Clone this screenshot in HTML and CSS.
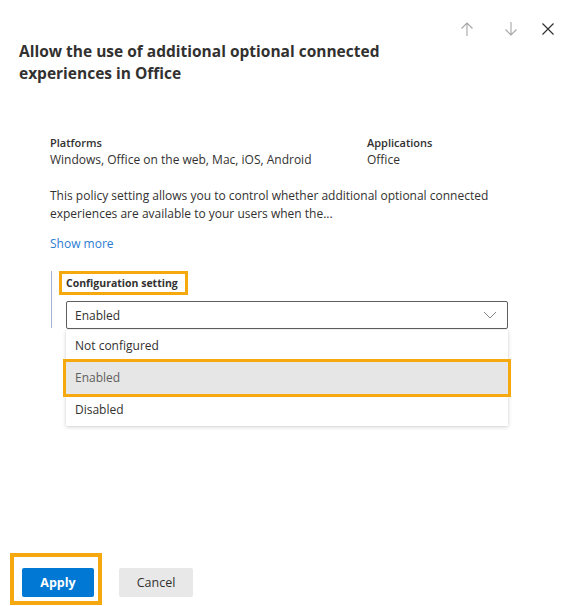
FILE: index.html
```html
<!DOCTYPE html>
<html>
<head>
<meta charset="utf-8">
<link rel="stylesheet" href="styles.css">
</head>
<body>
<div class="panel">
  <div class="topbar">
    <svg class="nav-icon up" width="14" height="16" viewBox="0 0 14 16"><path d="M7 15V2M1.5 7.5L7 2l5.5 5.5" fill="none" stroke="currentColor" stroke-width="1.1"/></svg>
    <svg class="nav-icon down" width="14" height="16" viewBox="0 0 14 16"><path d="M7 1v13M1.5 8.5L7 14l5.5-5.5" fill="none" stroke="currentColor" stroke-width="1.1"/></svg>
    <svg class="nav-icon close" width="14" height="14" viewBox="0 0 14 14"><path d="M1.5 1.5l11 11M12.5 1.5l-11 11" fill="none" stroke="currentColor" stroke-width="1.2"/></svg>
  </div>
  <h1 class="title">Allow the use of additional optional connected<br>experiences in Office</h1>
  <div class="meta">
    <div class="meta-col platforms">
      <div class="meta-label">Platforms</div>
      <div class="meta-value">Windows, Office on the web, Mac, iOS, Android</div>
    </div>
    <div class="meta-col">
      <div class="meta-label">Applications</div>
      <div class="meta-value">Office</div>
    </div>
  </div>
  <p class="desc">This policy setting allows you to control whether additional optional connected<br>experiences are available to your users when the...</p>
  <a class="show-more">Show more</a>
  <div class="config">
    <div class="config-field">
      <div class="label-box"><span class="config-label">Configuration setting</span></div>
      <div class="select">
        <span>Enabled</span>
        <svg class="chevron" width="14" height="8" viewBox="0 0 14 8"><path d="M1 1l6 6 6-6" fill="none" stroke="currentColor" stroke-width="1"/></svg>
      </div>
    </div>
    <div class="listbox">
      <div class="option">Not configured</div>
      <div class="option selected">Enabled</div>
      <div class="option">Disabled</div>
    </div>
  </div>
  <div class="footer">
    <div class="apply-box"><button class="btn primary">Apply</button></div>
    <button class="btn secondary">Cancel</button>
  </div>
</div>
</body>
</html>
```

FILE: styles.css
```css
* { box-sizing: border-box; }
html, body { margin: 0; padding: 0; background: #fff; }
body {
  font-family: "Segoe UI", "Open Sans", "Noto Sans", sans-serif;
  color: #323130;
  width: 565px;
  height: 606px;
  overflow: hidden;
}
.panel {
  height: 606px;
  display: flex;
  flex-direction: column;
}
.topbar {
  display: flex;
  justify-content: flex-end;
  align-items: center;
  height: 16px;
  margin-top: 21px;
  padding-right: 10px;
}
.nav-icon { display: block; }
.nav-icon.up { color: #a6a6a6; margin-right: 30px; }
.nav-icon.down { color: #a6a6a6; margin-right: 23px; }
.nav-icon.close { color: #323130; }
.title {
  margin: 3px 0 0 19px;
  font-size: 15.5px;
  font-weight: 700;
  line-height: 22px;
}
.meta {
  display: flex;
  margin: 51px 0 0 50px;
}
.meta-col.platforms { width: 317px; }
.meta-label {
  font-size: 11px;
  font-weight: 600;
  line-height: 16px;
}
.meta-value {
  font-size: 12px;
  line-height: 17px;
}
.desc {
  margin: 19px 0 0 50px;
  font-size: 12px;
  line-height: 18px;
}
.show-more {
  display: block;
  margin: 12px 0 0 50px;
  font-size: 12px;
  line-height: 18px;
  color: #2b7cd3;
}
.config {
  position: relative;
  margin: 18px 0 0 51px;
}
.config-field {
  border-left: 1.5px solid #9fb4cc;
  padding: 0 0 0 7px;
  width: 457px;
  height: 57px;
}
.label-box {
  display: flex;
  align-items: center;
  border: 3.5px solid #f6a80f;
  padding: 0 0 0 4px;
  width: 129px;
  height: 24px;
}
.config-label {
  font-size: 10.5px;
  font-weight: 700;
  line-height: 16px;
}
.select {
  margin: 6px 0 0 7px;
  width: 442px;
  height: 28px;
  border: 1px solid #605e5c;
  border-radius: 2px;
  display: flex;
  align-items: center;
  justify-content: space-between;
  padding: 0 10px 0 8px;
  font-size: 12px;
}
.chevron { color: #8a8886; }
.listbox {
  position: absolute;
  left: 15px;
  top: 59px;
  width: 442px;
  background: #fff;
  box-shadow: 0 1px 4px rgba(0,0,0,0.18), 0 0 1px rgba(0,0,0,0.1);
}
.option {
  height: 32px;
  line-height: 32px;
  padding-left: 9px;
  font-size: 12px;
}
.option.selected {
  background: #e6e6e6;
  color: #605e5c;
  outline: 3.5px solid #f6a80f;
}
.footer {
  margin-top: auto;
  display: flex;
  align-items: flex-end;
  padding: 0 0 1px 10px;
}
.apply-box {
  border: 4px solid #f6a80f;
  padding: 11px 4px 4px 8px;
  width: 92px;
  height: 52px;
}
.btn {
  font-family: inherit;
  font-size: 12.5px;
  height: 29px;
  border: none;
  border-radius: 2px;
  padding: 0;
}
.btn.primary {
  width: 72px;
  background: #0078d4;
  color: #fff;
  font-weight: 700;
}
.btn.secondary {
  width: 74px;
  margin: 0 0 8px 17px;
  background: #e8e8e8;
  color: #323130;
}
```
